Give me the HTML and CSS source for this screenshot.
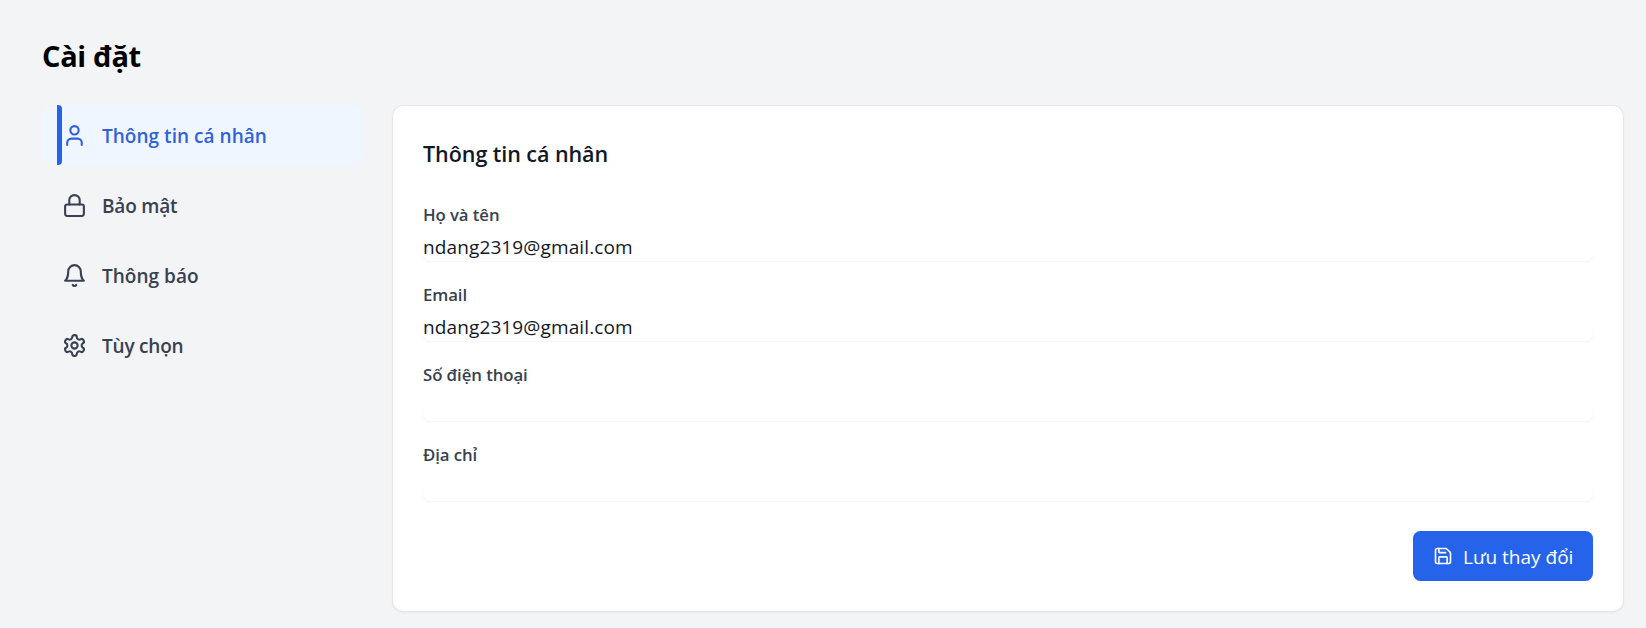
FILE: index.html
```html
<!DOCTYPE html>
<html lang="vi">
<head>
<meta charset="utf-8">
<title>Cài đặt</title>
<link rel="stylesheet" href="styles.css">
</head>
<body>
<main class="page">
  <h1 class="page-title"><span>Cài đặt</span></h1>
  <div class="layout">
    <nav class="nav">
      <a class="nav-item active"><svg class="icon" viewBox="0 0 24 24"><path d="M19 21v-2a4 4 0 0 0-4-4H9a4 4 0 0 0-4 4v2"/><circle cx="12" cy="7" r="4"/></svg><span class="wide">Thông tin cá nhân</span></a>
      <a class="nav-item"><svg class="icon" viewBox="0 0 24 24"><rect x="3" y="11" width="18" height="11" rx="2"/><path d="M7 11V7a5 5 0 0 1 10 0v4"/></svg><span>Bảo mật</span></a>
      <a class="nav-item"><svg class="icon" viewBox="0 0 24 24"><path d="M6 8a6 6 0 0 1 12 0c0 7 3 9 3 9H3s3-2 3-9"/><path d="M10.3 21a1.94 1.94 0 0 0 3.4 0"/></svg><span class="wide">Thông báo</span></a>
      <a class="nav-item"><svg class="icon" viewBox="0 0 24 24"><path d="M12.22 2h-.44a2 2 0 0 0-2 2v.18a2 2 0 0 1-1 1.73l-.43.25a2 2 0 0 1-2 0l-.15-.08a2 2 0 0 0-2.73.73l-.22.38a2 2 0 0 0 .73 2.73l.15.1a2 2 0 0 1 1 1.72v.51a2 2 0 0 1-1 1.74l-.15.09a2 2 0 0 0-.73 2.73l.22.38a2 2 0 0 0 2.73.73l.15-.08a2 2 0 0 1 2 0l.43.25a2 2 0 0 1 1 1.73V20a2 2 0 0 0 2 2h.44a2 2 0 0 0 2-2v-.18a2 2 0 0 1 1-1.73l.43-.25a2 2 0 0 1 2 0l.15.08a2 2 0 0 0 2.73-.73l.22-.39a2 2 0 0 0-.73-2.73l-.15-.08a2 2 0 0 1-1-1.74v-.5a2 2 0 0 1 1-1.74l.15-.09a2 2 0 0 0 .73-2.73l-.22-.38a2 2 0 0 0-2.73-.73l-.15.08a2 2 0 0 1-2 0l-.43-.25a2 2 0 0 1-1-1.73V4a2 2 0 0 0-2-2z"/><circle cx="12" cy="12" r="3"/></svg><span>Tùy chọn</span></a>
    </nav>
    <section class="card">
      <h2 class="card-title">Thông tin cá nhân</h2>
      <form class="form">
        <div class="field"><label for="name">Họ và tên</label><input id="name" type="text" value="ndang2319@gmail.com"></div>
        <div class="field"><label for="email">Email</label><input id="email" type="email" value="ndang2319@gmail.com"></div>
        <div class="field"><label for="phone">Số điện thoại</label><input id="phone" type="tel"></div>
        <div class="field"><label for="address">Địa chỉ</label><input id="address" type="text"></div>
        <div class="actions">
          <button class="save" type="button"><svg class="icon" viewBox="0 0 24 24"><path d="M15.2 3a2 2 0 0 1 1.4.6l3.8 3.8a2 2 0 0 1 .6 1.4V19a2 2 0 0 1-2 2H5a2 2 0 0 1-2-2V5a2 2 0 0 1 2-2z"/><path d="M17 21v-7a1 1 0 0 0-1-1H8a1 1 0 0 0-1 1v7"/><path d="M7 3v4a1 1 0 0 0 1 1h7"/></svg><span>Lưu thay đổi</span></button>
        </div>
      </form>
    </section>
  </div>
</main>
</body>
</html>
```
FILE: styles.css
```css
* { box-sizing: border-box; margin: 0; padding: 0; }
body {
  background: #f3f4f6;
  color: #111827;
  font: 20px/30px "Open Sans", "Noto Sans", sans-serif;
}
.page { height: 628px; padding: 35px 23px 17px 42px; overflow: hidden; }
.page-title {
  height: 40px;
  margin-bottom: 30px;
  color: #000;
  font-size: 29px;
  font-weight: 700;
  line-height: 42px;
  letter-spacing: -0.35px;
}
.layout { display: grid; grid-template-columns: 320px 1fr; gap: 31px; }
.nav { display: flex; flex-direction: column; gap: 10px; }
.nav-item {
  position: relative;
  display: flex;
  align-items: center;
  gap: 15px;
  height: 60px;
  padding-left: 20px;
  border-radius: 10px;
  color: #374151;
  font-size: 19px;
  font-weight: 600;
  letter-spacing: -0.2px;
}
.nav-item span { padding-top: 2px; }
.nav-item .wide { letter-spacing: 0.03px; }
.nav-item.active { background: #eff6ff; color: #2f62d9; }
.nav-item.active::before {
  content: "";
  position: absolute;
  left: 15px;
  top: 0;
  width: 5px;
  height: 60px;
  border-radius: 0 4px 4px 0;
  background: #2563eb;
}
.icon {
  flex: none;
  width: 25px;
  height: 25px;
  fill: none;
  stroke: currentColor;
  stroke-width: 2;
  stroke-linecap: round;
  stroke-linejoin: round;
}
.card {
  height: 505px;
  margin-top: 1px;
  padding: 30px;
  border-radius: 10px;
  background: #fff;
  box-shadow: 0 0 0 1px #e5e7eb, 0 1px 2px 1px rgba(0, 0, 0, .05);
}
.card-title {
  height: 35px;
  margin-bottom: 30px;
  font-size: 21.5px;
  font-weight: 600;
  line-height: 35px;
  letter-spacing: -0.05px;
}
.form { display: flex; flex-direction: column; gap: 20px; }
.field { display: flex; flex-direction: column; gap: 5px; height: 60px; }
.field label {
  color: #374151;
  font-size: 16.8px;
  font-weight: 600;
  line-height: 27px;
  height: 25px;
  letter-spacing: -0.08px;
}
.field input {
  width: 100%;
  height: 30px;
  padding-top: 2px;
  border: 0;
  border-radius: 7.5px;
  background: #fff;
  color: #111827;
  font: inherit;
  font-size: 19px;
  letter-spacing: 0.12px;
  box-shadow: 0 1px 2px rgba(0, 0, 0, .05);
}
.actions { display: flex; justify-content: flex-end; padding-top: 10px; }
.save {
  display: flex;
  align-items: center;
  gap: 10px;
  width: 180px;
  height: 50px;
  padding-left: 20px;
  border: 0;
  border-radius: 7.5px;
  background: #2563eb;
  color: #fff;
  font: inherit;
  font-size: 19px;
  white-space: nowrap;
}
.save span { padding-top: 2px; }
.save .icon { width: 20px; height: 20px; }
```
